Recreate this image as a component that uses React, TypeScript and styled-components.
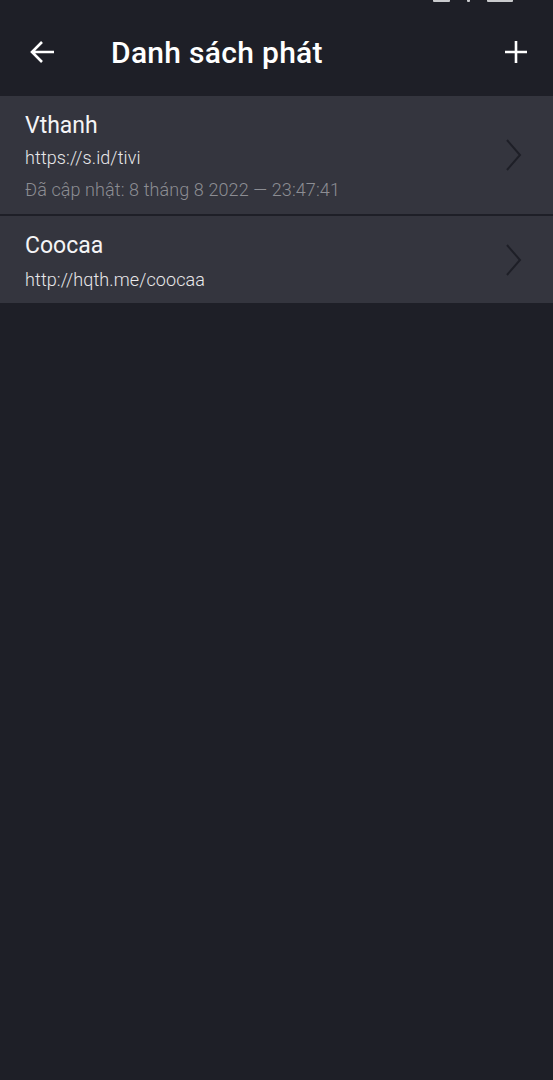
import React from "react";
import styled, { createGlobalStyle } from "styled-components";

const Global = createGlobalStyle`
  html, body { margin: 0; padding: 0; background: #1e1f27; }
  body { font-family: Roboto, "Noto Sans", sans-serif; }
  #root { min-height: 1080px; background: #1e1f27; }
`;

const Page = styled.div`
  width: 553px;
  min-height: 1080px;
  background: #1e1f27;
  display: flex;
  flex-direction: column;
`;

const Header = styled.header`
  position: relative;
  height: 96px;
  display: flex;
  align-items: center;
  padding: 8px 14px 0 20px;
  box-sizing: border-box;
  color: #fff;
`;

const StatusBits = styled.div`
  position: absolute;
  top: 0;
  left: 433px;
  display: flex;
  gap: 17px;
`;

const Bit = styled.span<{ $w: number }>`
  display: block;
  width: ${(p) => p.$w}px;
  height: 2px;
  background: #c9cacd;
  border-radius: 0 0 1px 1px;
`;

const IconBtn = styled.button`
  width: 46px;
  height: 46px;
  padding: 0;
  border: 0;
  background: none;
  color: #fff;
  display: flex;
  align-items: center;
  justify-content: center;
`;

const Title = styled.h1`
  margin: 0 0 0 45px;
  flex: 1;
  font-size: 30px;
  font-weight: 500;
  letter-spacing: 0.3px;
`;

const List = styled.div`
  display: flex;
  flex-direction: column;
  gap: 2px;
`;

const Item = styled.div<{ $h: number }>`
  background: #34353e;
  height: ${(p) => p.$h}px;
  box-sizing: border-box;
  display: flex;
  align-items: center;
  padding: 0 30px 0 25px;
`;

const Texts = styled.div`
  flex: 1;
  align-self: stretch;
  display: flex;
  flex-direction: column;
  padding-top: 15px;
`;

const Name = styled.div`
  color: #f4f4f6;
  font-size: 23px;
  line-height: 30px;
`;

const Url = styled.div<{ $lh: number }>`
  color: #e8e8ea;
  font-size: 18px;
  font-weight: 300;
  letter-spacing: 0.1px;
  line-height: ${(p) => p.$lh}px;
`;

const Updated = styled.div`
  color: #8c8d93;
  font-size: 18px;
  font-weight: 300;
  letter-spacing: 0.1px;
  line-height: 31px;
`;

const Chevron = () => (
  <svg width="18" height="34" viewBox="0 0 18 34">
    <path d="M2 2 L15 17 L2 32" fill="none" stroke="#1e1f27" strokeWidth="2" />
  </svg>
);

export default function App() {
  return (
    <>
      <Global />
      <Page>
        <Header>
          <StatusBits>
            <Bit $w={17} />
            <Bit $w={3} />
            <Bit $w={26} />
          </StatusBits>
          <IconBtn aria-label="back">
            <svg width="28" height="28" viewBox="0 0 28 28">
              <path d="M25 14 H4 M13 4 L3 14 L13 24" fill="none" stroke="#fff" strokeWidth="2.6" />
            </svg>
          </IconBtn>
          <Title>Danh sách phát</Title>
          <IconBtn aria-label="add">
            <svg width="24" height="24" viewBox="0 0 24 24">
              <path d="M12 1 V23 M1 12 H23" fill="none" stroke="#fff" strokeWidth="2.6" />
            </svg>
          </IconBtn>
        </Header>
        <List>
          <Item $h={118}>
            <Texts>
              <Name>Vthanh</Name>
              <Url $lh={33}>https://s.id/tivi</Url>
              <Updated>Đã cập nhật: 8 tháng 8 2022 — 23:47:41</Updated>
            </Texts>
            <Chevron />
          </Item>
          <Item $h={87}>
            <Texts>
              <Name>Coocaa</Name>
              <Url $lh={37}>http://hqth.me/coocaa</Url>
            </Texts>
            <Chevron />
          </Item>
        </List>
      </Page>
    </>
  );
}
